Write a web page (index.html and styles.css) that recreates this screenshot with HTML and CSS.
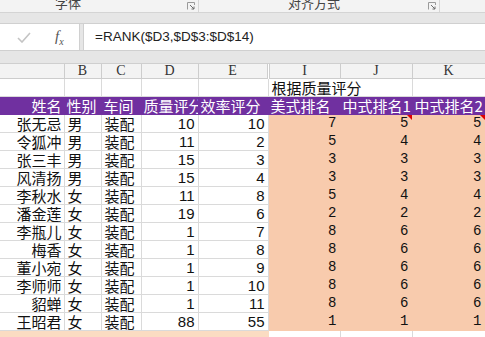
FILE: index.html
```html
<!DOCTYPE html>
<html lang="zh-CN">
<head>
    <meta charset="UTF-8">
    <title>质量评分排名</title>
    <link rel="stylesheet" href="styles.css">
</head>
<body>

<!-- 功能区分组标题 -->
<div class="ribbon">
    <div class="group group-font">
        <span class="group-label">字体</span>
        <svg class="launcher" width="8" height="8" viewBox="0 0 8 8"><path d="M0.5 7.5V0.5H7.5V3" fill="none" stroke="#9a9a9a"/><path d="M3 3L7 7M4.5 7H7V4.5" fill="none" stroke="#6d6d6d"/></svg>
    </div>
    <div class="group group-align">
        <span class="group-label">对齐方式</span>
        <svg class="launcher" width="8" height="8" viewBox="0 0 8 8"><path d="M0.5 7.5V0.5H7.5V3" fill="none" stroke="#9a9a9a"/><path d="M3 3L7 7M4.5 7H7V4.5" fill="none" stroke="#6d6d6d"/></svg>
    </div>
</div>
<div class="band"></div>

<!-- 编辑栏 -->
<div class="formula-bar">
    <div class="fx-tools">
        <svg class="check" width="14" height="11" viewBox="0 0 14 11"><path d="M1 6L5 10L13 1" fill="none" stroke="#c4c4c4" stroke-width="1.6"/></svg>
        <span class="fx">f<sub>x</sub></span>
    </div>
    <div class="formula">=RANK($D3,$D$3:$D$14)</div>
</div>
<div class="band band-low"></div>

<!-- 工作表 -->
<table class="sheet">
    <colgroup>
        <col style="width:64px"><col style="width:37px"><col style="width:40px"><col style="width:57px">
        <col style="width:70px"><col style="width:72px"><col style="width:72px"><col style="width:73px">
    </colgroup>
    <tr class="col-head">
        <td></td><td>B</td><td>C</td><td>D</td><td class="hidden-edge">E</td><td>I</td><td>J</td><td>K</td>
    </tr>
    <tr>
        <td></td><td></td><td></td><td></td><td></td><td class="title" colspan="2">根据质量评分</td><td></td>
    </tr>
    <tr class="head">
        <td class="r">姓名</td><td>性别</td><td>车间</td><td>质量评分</td><td>效率评分</td><td>美式排名</td><td>中式排名1</td><td>中式排名2</td>
    </tr>
    <tbody id="rows"></tbody>
    <tr class="tail">
        <td class="sel"></td><td class="sel"></td><td class="sel"></td><td class="sel"></td><td class="sel"></td><td></td><td></td><td></td>
    </tr>
</table>

<script>
    // 数据: 姓名, 性别, 车间, 质量评分, 效率评分, 美式排名, 中式排名1, 中式排名2
    const data = [
        ['张无忌', '男', '装配', 10, 10, 7, 5, 5],
        ['令狐冲', '男', '装配', 11, 2, 5, 4, 4],
        ['张三丰', '男', '装配', 15, 3, 3, 3, 3],
        ['风清扬', '男', '装配', 15, 4, 3, 3, 3],
        ['李秋水', '女', '装配', 11, 8, 5, 4, 4],
        ['潘金莲', '女', '装配', 19, 6, 2, 2, 2],
        ['李瓶儿', '女', '装配', 1, 7, 8, 6, 6],
        ['梅香', '女', '装配', 1, 8, 8, 6, 6],
        ['董小宛', '女', '装配', 1, 9, 8, 6, 6],
        ['李师师', '女', '装配', 1, 10, 8, 6, 6],
        ['貂蝉', '女', '装配', 1, 11, 8, 6, 6],
        ['王昭君', '女', '装配', 88, 55, 1, 1, 1]
    ];

    const tbody = document.getElementById('rows');
    data.forEach((row, i) => {
        const tr = document.createElement('tr');
        tr.innerHTML = `<td class="r">${row[0]}</td><td>${row[1]}</td><td>${row[2]}</td>
            <td class="num">${row[3]}</td><td class="num">${row[4]}</td>
            <td class="rank">${row[5]}</td>
            <td class="rank${i === 0 ? ' note' : ''}">${row[6]}</td>
            <td class="rank${i === 0 ? ' note' : ''}">${row[7]}</td>`;
        tbody.appendChild(tr);
    });
</script>

</body>
</html>
```

FILE: styles.css
```css
body {
    margin: 0;
    width: 485px;
    height: 337px;
    overflow: hidden;
    background-color: #ffffff;
    font-family: "Noto Sans CJK SC", sans-serif;
}
.ribbon {
    height: 12px;
    background-color: #f3f3f3;
    display: flex;
    overflow: hidden;
}
.group {
    display: flex;
    align-items: flex-start;
    border-right: 1px solid #d6d6d6;
}
.group-font {
    width: 198px;
}
.group-align {
    width: 240px;
}
.group-label {
    font-size: 13px;
    line-height: 13px;
    margin-top: -4px;
    color: #444;
}
.group-font .group-label {
    margin-left: 55px;
}
.group-align .group-label {
    margin-left: 89px;
}
.launcher {
    margin-left: auto;
    margin-right: 3px;
    margin-top: 2px;
}
.band {
    height: 10px;
    background-color: #e6e6e6;
    border-top: 1px solid #d4d4d4;
}
.band-low {
    height: 12px;
    border-top: none;
    border-bottom: 1px solid #cfcfcf;
}
.formula-bar {
    display: flex;
    height: 26px;
    background-color: #e6e6e6;
    border-top: 1px solid #d0d0d0;
    border-bottom: 1px solid #d0d0d0;
}
.fx-tools {
    width: 79px;
    background-color: #ffffff;
    border-right: 1px solid #d0d0d0;
    display: flex;
    align-items: center;
}
.check {
    margin-left: 17px;
}
.fx {
    margin-left: 24px;
    font-family: "Liberation Serif", serif;
    font-style: italic;
    font-size: 15px;
    color: #555;
}
.fx sub {
    font-size: 10px;
}
.formula {
    flex: 1;
    margin-left: 3px;
    background-color: #ffffff;
    border-left: 1px solid #d0d0d0;
    padding-left: 11px;
    font-family: "Liberation Sans", sans-serif;
    font-size: 13.5px;
    line-height: 26px;
    color: #222;
}
.sheet {
    border-collapse: collapse;
    table-layout: fixed;
    width: 485px;
}
.sheet td {
    height: 17px;
    padding: 0 3px;
    border: 1px solid #dadada;
    font-size: 15px;
    line-height: 17px;
    white-space: nowrap;
    overflow: hidden;
    color: #111;
}
.sheet tr:first-child td {
    border-top: none;
}
.sheet td:first-child {
    border-left: none;
}
.col-head td {
    height: 14px;
    background-color: #f3f3f3;
    border-color: #cdcdcd;
    text-align: center;
    font-family: "Liberation Serif", serif;
    font-size: 14px;
    line-height: 14px;
    color: #333;
}
.col-head .hidden-edge {
    border-right: 3px double #cdcdcd;
}
.title {
    font-size: 15px;
}
.head td {
    background-color: #7030a0;
    border-color: #7030a0;
    color: #ffffff;
    padding-left: 2px;
}
.r {
    text-align: right;
}
.sheet td.r {
    padding-right: 2px;
}
.num {
    text-align: right;
    font-family: "Liberation Sans", sans-serif;
}
.sheet td.rank {
    text-align: right;
    background-color: #f8cbad;
    border-color: #f8cbad;
    font-family: "Liberation Mono", monospace;
    font-size: 14px;
    position: relative;
}
.sheet td.note::after {
    content: "";
    position: absolute;
    top: 0;
    right: 0;
    border-top: 5px solid #e00000;
    border-left: 5px solid transparent;
}
.tail td {
    height: 9px;
}
.sheet .tail td.sel {
    background-color: #fbdcc2;
    border-color: #fbdcc2;
}
```
